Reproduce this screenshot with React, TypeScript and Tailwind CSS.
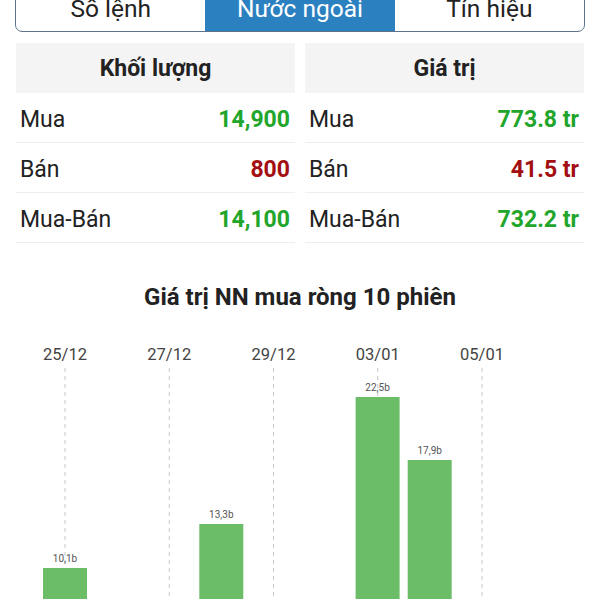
import React from 'react';

const rows = [
  { label: 'Mua', kl: '14,900', gt: '773.8 tr', up: true },
  { label: 'Bán', kl: '800', gt: '41.5 tr', up: false },
  { label: 'Mua-Bán', kl: '14,100', gt: '732.2 tr', up: true },
];

const dates = ['25/12', '27/12', '29/12', '03/01', '05/01'];

// cột theo phiên: chỉ số phiên, đỉnh cột (y), nhãn
const bars = [
  { i: 0, top: 569, label: '10,1b' },
  { i: 3, top: 525, label: '13,3b' },
  { i: 6, top: 398, label: '22,5b' },
  { i: 7, top: 461, label: '17,9b' },
];

function Table({ title, field }: { title: string; field: 'kl' | 'gt' }) {
  return (
    <div className="flex-1 flex flex-col">
      <div className="h-[50px] bg-[#f4f4f4] flex items-center justify-center pt-[3px] text-[23px] font-bold text-[#222]">
        {title}
      </div>
      {rows.map((r) => (
        <div key={r.label} className="h-[50px] flex items-center justify-between border-b border-[#eeeeee] pl-1 pr-[5px] pt-[5px]">
          <span className="text-[23px] text-[#222]">{r.label}</span>
          <span className={`text-[23px] font-bold ${r.up ? 'text-[#22a52b]' : 'text-[#a30f12]'}`}>{r[field]}</span>
        </div>
      ))}
    </div>
  );
}

export default function App() {
  return (
    <div className="w-[600px] h-[600px] overflow-hidden bg-white" style={{ fontFamily: 'Roboto, "Noto Sans", sans-serif' }}>
      {/* Tabs */}
      <div className="mx-[15px] -mt-[14px] h-[46px] flex border-[1.5px] border-[#5d7488] rounded-b-[7px] overflow-hidden">
        <div className="flex-1 flex items-center justify-center text-[24.5px] text-[#222]">Số lệnh</div>
        <div className="flex-1 flex items-center justify-center text-[24.5px] text-white bg-[#2b80c0]">Nước ngoài</div>
        <div className="flex-1 flex items-center justify-center text-[24.5px] text-[#222]">Tín hiệu</div>
      </div>

      {/* Bảng */}
      <div className="flex gap-[10px] px-4 mt-[11px]">
        <Table title="Khối lượng" field="kl" />
        <Table title="Giá trị" field="gt" />
      </div>

      <div className="mt-[39px] text-center text-[24px] font-bold text-[#222] leading-[30px]">Giá trị NN mua ròng 10 phiên</div>

      {/* Biểu đồ */}
      <svg width="600" height="290" viewBox="0 314 600 290" className="block mt-[1px]">
        {dates.map((d, k) => {
          const x = 65 + k * 104.25;
          return (
            <g key={d}>
              <text x={x} y={361} textAnchor="middle" fontSize="16.5" fill="#444" fontFamily="Roboto, sans-serif">{d}</text>
              <line x1={x} y1={369} x2={x} y2={600} stroke="#c4c4c4" strokeWidth="1" strokeDasharray="4 4" />
            </g>
          );
        })}
        {bars.map((b) => {
          const cx = 65 + b.i * 52.1;
          return (
            <g key={b.label}>
              <rect x={cx - 22} y={b.top} width={44} height={600 - b.top} fill="#6cbd68" />
              <text x={cx} y={b.top - 6} textAnchor="middle" fontSize="10" fill="#555" fontFamily="Roboto, sans-serif">{b.label}</text>
            </g>
          );
        })}
      </svg>
    </div>
  );
}
